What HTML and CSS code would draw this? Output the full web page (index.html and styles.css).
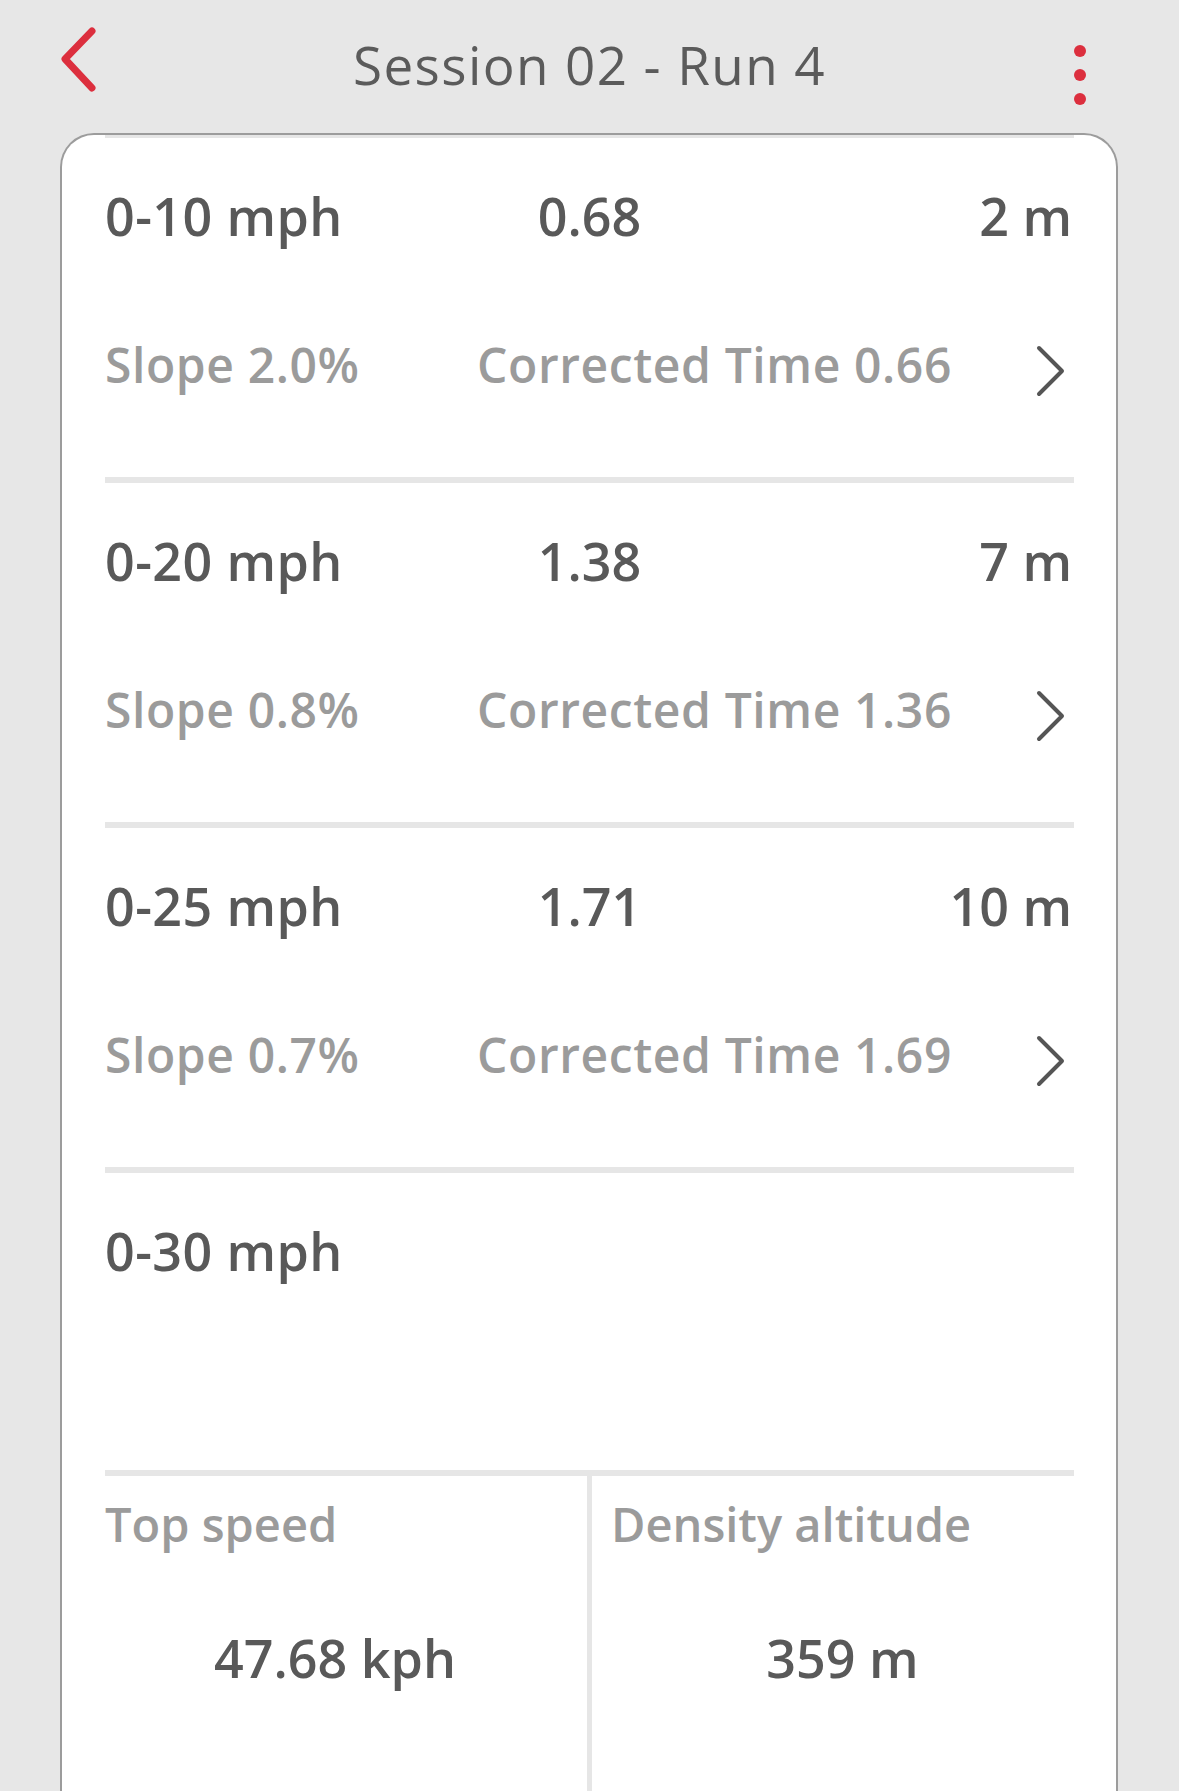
FILE: index.html
```html
<!DOCTYPE html>
<html lang="en">
<head>
<meta charset="utf-8">
<title>Session 02 - Run 4</title>
<link rel="stylesheet" href="styles.css">
</head>
<body>
<header class="header">
  <svg class="back" viewBox="0 0 44 72" width="44" height="72" aria-label="Back">
    <path d="M34 7 L7 35 L34 64" fill="none" stroke="#dc2f3e" stroke-width="7" stroke-linecap="round" stroke-linejoin="round"/>
  </svg>
  <h1 class="title">Session 02 - Run 4</h1>
  <svg class="kebab" viewBox="0 0 20 66" width="20" height="66" aria-label="More">
    <circle cx="10" cy="9" r="6" fill="#dc2f3e"/>
    <circle cx="10" cy="33" r="6" fill="#dc2f3e"/>
    <circle cx="10" cy="57" r="6" fill="#dc2f3e"/>
  </svg>
</header>

<main class="card">
  <div class="list">
    <div class="sep"></div>
    <div class="row">
      <div class="main-line"><span class="range">0-10 mph</span><span class="time">0.68</span><span class="dist">2 m</span></div>
      <div class="sub-line"><span>Slope 2.0%</span><span>Corrected Time 0.66</span>
        <svg class="chev" viewBox="0 0 31 54" width="31" height="54"><path d="M4 4 L27 27 L4 50" fill="none" stroke="#555" stroke-width="4" stroke-linecap="round" stroke-linejoin="round"/></svg></div>
    </div>
    <div class="sep"></div>
    <div class="row">
      <div class="main-line"><span class="range">0-20 mph</span><span class="time">1.38</span><span class="dist">7 m</span></div>
      <div class="sub-line"><span>Slope 0.8%</span><span>Corrected Time 1.36</span>
        <svg class="chev" viewBox="0 0 31 54" width="31" height="54"><path d="M4 4 L27 27 L4 50" fill="none" stroke="#555" stroke-width="4" stroke-linecap="round" stroke-linejoin="round"/></svg></div>
    </div>
    <div class="sep"></div>
    <div class="row">
      <div class="main-line"><span class="range">0-25 mph</span><span class="time">1.71</span><span class="dist">10 m</span></div>
      <div class="sub-line"><span>Slope 0.7%</span><span>Corrected Time 1.69</span>
        <svg class="chev" viewBox="0 0 31 54" width="31" height="54"><path d="M4 4 L27 27 L4 50" fill="none" stroke="#555" stroke-width="4" stroke-linecap="round" stroke-linejoin="round"/></svg></div>
    </div>
    <div class="sep"></div>
    <div class="row row-short">
      <div class="main-line"><span class="range">0-30 mph</span><span class="time"></span><span class="dist"></span></div>
    </div>
    <div class="sep"></div>
    <div class="stats">
      <div class="stat stat-left">
        <div class="stat-label">Top speed</div>
        <div class="stat-value">47.68 kph</div>
      </div>
      <div class="stat-divider"></div>
      <div class="stat stat-right">
        <div class="stat-label">Density altitude</div>
        <div class="stat-value">359 m</div>
      </div>
    </div>
  </div>
</main>
</body>
</html>
```
FILE: styles.css
```css
* { box-sizing: border-box; }

html, body {
  margin: 0;
  padding: 0;
  height: 1791px;
  overflow: hidden;
  background: #e7e7e7;
  font-family: "Open Sans", "Noto Sans", sans-serif;
  color: #595959;
}

.header {
  display: grid;
  grid-template-columns: 1fr auto 1fr;
  align-items: start;
  height: 133px;
}

.back {
  justify-self: start;
  margin: 24px 0 0 58px;
  display: block;
}

.title {
  margin: 35px 0 0 0;
  font-size: 53px;
  line-height: 60px;
  font-weight: 400;
  letter-spacing: 1.4px;
  color: #5b5b5b;
  white-space: nowrap;
}

.kebab {
  justify-self: end;
  margin: 42px 89px 0 0;
  display: block;
}

.card {
  margin: 0 61px 0 60px;
  height: 1720px;
  background: #fff;
  border: 2px solid #9c9c9c;
  border-bottom: none;
  border-radius: 34px 34px 0 0;
  padding: 0 42px 0 43px;
  overflow: hidden;
}

.list {
  margin-top: -3px;
}

.sep {
  height: 6px;
  background: #e6e6e6;
}

.row {
  height: 339px;
  padding-top: 48px;
}

.row-short {
  height: 297px;
}

.main-line {
  display: grid;
  grid-template-columns: 1fr auto 1fr;
  font-size: 52px;
  line-height: 60px;
  font-weight: 600;
  color: #595959;
  height: 60px;
}

.main-line .range { letter-spacing: 0.4px; }
.main-line .time { text-align: center; }
.main-line .dist { text-align: right; padding-right: 2px; }

.sub-line {
  display: grid;
  grid-template-columns: 372px 1fr auto;
  align-items: start;
  margin-top: 89px;
  font-size: 48px;
  line-height: 60px;
  font-weight: 600;
  letter-spacing: 0.6px;
  color: #9b9b9b;
}

.chev {
  display: block;
  margin: 9px 8px 0 0;
}

.stats {
  display: grid;
  grid-template-columns: 1fr 5px 1fr;
  height: 420px;
}

.stat-divider {
  background: #e6e6e6;
}

.stat {
  padding-top: 18px;
}

.stat-left { padding-right: 22px; }
.stat-right { padding-left: 19px; }

.stat-label {
  font-size: 47px;
  line-height: 60px;
  font-weight: 600;
  color: #9b9b9b;
  white-space: nowrap;
}

.stat-value {
  margin-top: 74px;
  font-size: 52px;
  line-height: 60px;
  font-weight: 600;
  color: #595959;
  text-align: center;
  white-space: nowrap;
}
```
